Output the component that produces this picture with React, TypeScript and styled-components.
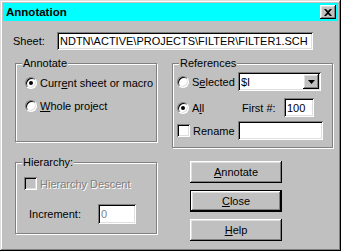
import React, { ReactNode } from 'react';
import styled, { createGlobalStyle } from 'styled-components';

const GlobalStyle = createGlobalStyle`
  html, body {
    margin: 0;
    padding: 0;
    background: #c0c0c0;
  }
  body {
    font-family: "Liberation Sans", Arial, sans-serif;
    font-size: 11px;
    color: #000;
  }
`;

// window frame + title
const Window = styled.div`
  box-sizing: border-box;
  width: 341px;
  height: 251px;
  padding: 3px;
  background: #c0c0c0;
  box-shadow: inset -1px -1px #000, inset 1px 1px #dfdfdf,
    inset -2px -2px #808080, inset 2px 2px #fff;
  display: flex;
  flex-direction: column;
`;

const TitleBar = styled.div`
  height: 18px;
  flex: none;
  background: #00ffff;
  display: flex;
  align-items: center;
  justify-content: space-between;
  padding: 0 2px 0 3px;
`;

const TitleText = styled.span`
  font-weight: bold;
  font-size: 11.5px;
`;

const Bevel = `
  box-shadow: inset -1px -1px #000, inset 1px 1px #fff,
    inset -2px -2px #808080, inset 2px 2px #dfdfdf;
`;

const CloseBox = styled.div`
  width: 16px;
  height: 14px;
  background: #c0c0c0;
  ${Bevel}
  display: flex;
  align-items: center;
  justify-content: center;
`;

const Body = styled.div`
  padding-top: 11px;
  display: flex;
  flex-direction: column;
`;

// sheet row
const SheetRow = styled.div`
  display: flex;
  align-items: center;
  padding-left: 10px;
`;

const FieldLabel = styled.span<{ $w: number; $pl?: number }>`
  box-sizing: border-box;
  width: ${p => p.$w}px;
  padding-left: ${p => p.$pl ?? 0}px;
  flex: none;
  white-space: nowrap;
`;

const Field = styled.div<{ $w: number; $h?: number; $disabled?: boolean }>`
  box-sizing: border-box;
  width: ${p => p.$w}px;
  height: ${p => p.$h ?? 19}px;
  flex: none;
  background: #fff;
  color: ${p => (p.$disabled ? '#808080' : '#000')};
  box-shadow: inset 1px 1px #808080, inset -1px -1px #fff,
    inset 2px 2px #000, inset -2px -2px #dfdfdf;
  padding: 0 2px 0 3px;
  display: flex;
  align-items: center;
  white-space: nowrap;
  overflow: hidden;
  position: relative;
`;

const DropButton = styled.div`
  position: absolute;
  right: 2px;
  top: 2px;
  width: 16px;
  height: 15px;
  background: #c0c0c0;
  ${Bevel}
  display: flex;
  align-items: center;
  justify-content: center;
`;

// columns
const Columns = styled.div`
  display: flex;
  gap: 15px;
  margin-top: 13px;
  padding-left: 12px;
`;

const Column = styled.div<{ $w: number }>`
  width: ${p => p.$w}px;
  display: flex;
  flex-direction: column;
`;

const Group = styled.div<{ $h: number; $mt?: number; $pad: string }>`
  box-sizing: border-box;
  position: relative;
  height: ${p => p.$h}px;
  margin-top: ${p => p.$mt ?? 0}px;
  border: 1px solid #808080;
  box-shadow: inset 1px 1px #fff, 1px 1px #fff;
  padding: ${p => p.$pad};
  display: flex;
  flex-direction: column;
`;

const Legend = styled.span`
  position: absolute;
  top: -7px;
  left: 6px;
  padding: 0 1px;
  line-height: 13px;
  background: #c0c0c0;
`;

const OptionRow = styled.div<{ $mt?: number }>`
  display: flex;
  align-items: center;
  gap: 3px;
  height: 13px;
  margin-top: ${p => p.$mt ?? 0}px;
  white-space: nowrap;
`;

const Row = styled.div<{ $mt?: number; $pl?: number }>`
  display: flex;
  align-items: center;
  margin-top: ${p => p.$mt ?? 0}px;
  padding-left: ${p => p.$pl ?? 0}px;
`;

const ChoiceCell = styled.div`
  width: 61px;
  flex: none;
  display: flex;
  align-items: center;
  gap: 3px;
`;

const RadioCircle = styled.span<{ $checked?: boolean }>`
  box-sizing: border-box;
  width: 12px;
  height: 12px;
  flex: none;
  border-radius: 50%;
  background: #fff;
  border: 1px solid;
  border-color: #808080 #fff #fff #808080;
  box-shadow: inset 1px 1px #000, inset -1px -1px #dfdfdf;
  display: flex;
  align-items: center;
  justify-content: center;
  &::after {
    content: '';
    width: 4px;
    height: 4px;
    border-radius: 50%;
    background: #000;
    display: ${p => (p.$checked ? 'block' : 'none')};
  }
`;

const CheckSquare = styled.span<{ $disabled?: boolean }>`
  box-sizing: border-box;
  width: 13px;
  height: 13px;
  flex: none;
  background: ${p => (p.$disabled ? '#c0c0c0' : '#fff')};
  box-shadow: inset 1px 1px #808080, inset -1px -1px #fff,
    inset 2px 2px #000, inset -2px -2px #dfdfdf;
`;

const Caption = styled.span<{ $disabled?: boolean }>`
  color: ${p => (p.$disabled ? '#808080' : '#000')};
  text-shadow: ${p => (p.$disabled ? '1px 1px #fff' : 'none')};
  u {
    text-underline-offset: 1px;
  }
`;

const ButtonStack = styled.div`
  display: flex;
  flex-direction: column;
  gap: 7px;
  margin-top: 13px;
  padding-left: 18px;
`;

const PushButton = styled.button<{ $default?: boolean }>`
  box-sizing: border-box;
  width: 92px;
  height: 22px;
  padding: 0;
  font: inherit;
  color: #000;
  background: #c0c0c0;
  border: ${p => (p.$default ? '1px solid #000' : 'none')};
  ${Bevel}
  u {
    text-underline-offset: 1px;
  }
`;

const Radio = ({ checked, children }: { checked?: boolean; children: ReactNode }) => (
  <>
    <RadioCircle $checked={checked} />
    <Caption>{children}</Caption>
  </>
);

function App() {
  return (
    <>
      <GlobalStyle />
      <Window>
        <TitleBar>
          <TitleText>Annotation</TitleText>
          <CloseBox>
            <svg width="8" height="7" viewBox="0 0 8 7">
              <path d="M0 0h2l2 2 2-2h2L5 3.5 8 7H6L4 5 2 7H0l3-3.5z" fill="#000" />
            </svg>
          </CloseBox>
        </TitleBar>
        <Body>
          <SheetRow>
            <FieldLabel $w={44}>Sheet:</FieldLabel>
            <Field $w={256} $h={18}>NDTN\ACTIVE\PROJECTS\FILTER\FILTER1.SCH</Field>
          </SheetRow>
          <Columns>
            <Column $w={142}>
              <Group $h={79} $pad="12px 0 0 9px">
                <Legend>Annotate</Legend>
                <OptionRow>
                  <Radio checked>
                    Curr<u>e</u>nt sheet or macro
                  </Radio>
                </OptionRow>
                <OptionRow $mt={10}>
                  <Radio>
                    <u>W</u>hole project
                  </Radio>
                </OptionRow>
              </Group>
              <Group $h={72} $mt={20} $pad="14px 0 0 8px">
                <Legend>Hierarchy:</Legend>
                <OptionRow>
                  <CheckSquare $disabled />
                  <Caption $disabled>Hierarchy Descent</Caption>
                </OptionRow>
                <Row $mt={14} $pl={5}>
                  <FieldLabel $w={69}>Increment:</FieldLabel>
                  <Field $w={38} $h={20} $disabled>0</Field>
                </Row>
              </Group>
            </Column>
            <Column $w={161}>
              <Group $h={85} $pad="8px 0 0 4px">
                <Legend>References</Legend>
                <Row>
                  <ChoiceCell>
                    <Radio>
                      S<u>e</u>lected
                    </Radio>
                  </ChoiceCell>
                  <Field $w={83}>
                    $I
                    <DropButton>
                      <svg width="7" height="4" viewBox="0 0 7 4">
                        <path d="M0 0h7L3.5 4z" fill="#000" />
                      </svg>
                    </DropButton>
                  </Field>
                </Row>
                <Row $mt={7}>
                  <ChoiceCell>
                    <Radio checked>
                      A<u>l</u>l
                    </Radio>
                  </ChoiceCell>
                  <FieldLabel $w={46} $pl={4}>First #:</FieldLabel>
                  <Field $w={30}>100</Field>
                </Row>
                <Row $mt={4}>
                  <ChoiceCell>
                    <CheckSquare />
                    <Caption>Rename</Caption>
                  </ChoiceCell>
                  <Field $w={85} />
                </Row>
              </Group>
              <ButtonStack>
                <PushButton>
                  <u>A</u>nnotate
                </PushButton>
                <PushButton $default>
                  <u>C</u>lose
                </PushButton>
                <PushButton>
                  <u>H</u>elp
                </PushButton>
              </ButtonStack>
            </Column>
          </Columns>
        </Body>
      </Window>
    </>
  );
}

export default App;
